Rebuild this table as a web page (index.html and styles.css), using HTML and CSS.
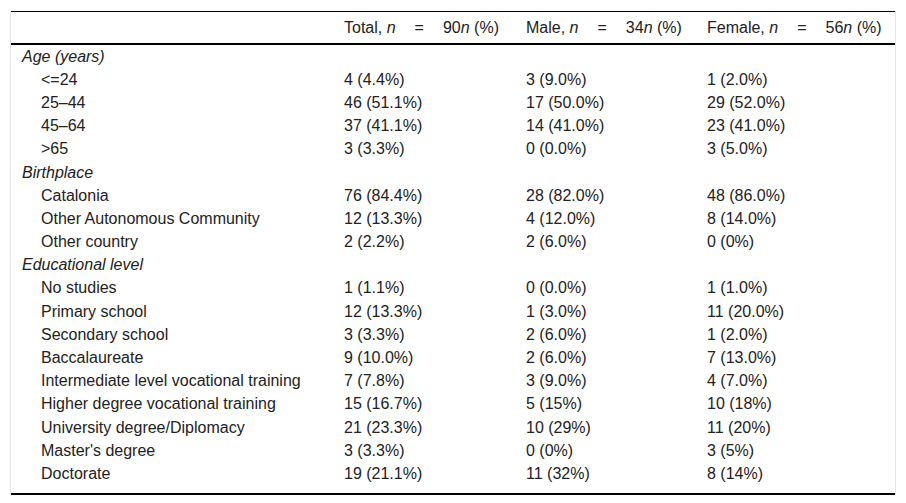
FILE: index.html
```html
<!DOCTYPE html>
<html lang="en">
<head>
<meta charset="utf-8">
<title>Table</title>
<link rel="stylesheet" href="styles.css">
</head>
<body>
<div class="wrap">
<table class="tbl">
<colgroup>
<col class="c1"><col class="c2"><col class="c3"><col class="c4">
</colgroup>
<thead>
<tr>
<th></th>
<th>Total, <i>n</i><span class="eq">=</span>90<i>n</i> (%)</th>
<th>Male, <i>n</i><span class="eq">=</span>34<i>n</i> (%)</th>
<th>Female, <i>n</i><span class="eq">=</span>56<i>n</i> (%)</th>
</tr>
</thead>
<tbody>
<tr class="grp"><td><i>Age (years)</i></td><td></td><td></td><td></td></tr>
<tr><td class="ind">&lt;=24</td><td>4 (4.4%)</td><td>3 (9.0%)</td><td>1 (2.0%)</td></tr>
<tr><td class="ind">25–44</td><td>46 (51.1%)</td><td>17 (50.0%)</td><td>29 (52.0%)</td></tr>
<tr><td class="ind">45–64</td><td>37 (41.1%)</td><td>14 (41.0%)</td><td>23 (41.0%)</td></tr>
<tr><td class="ind">&gt;65</td><td>3 (3.3%)</td><td>0 (0.0%)</td><td>3 (5.0%)</td></tr>
<tr class="grp"><td><i>Birthplace</i></td><td></td><td></td><td></td></tr>
<tr><td class="ind">Catalonia</td><td>76 (84.4%)</td><td>28 (82.0%)</td><td>48 (86.0%)</td></tr>
<tr><td class="ind">Other Autonomous Community</td><td>12 (13.3%)</td><td>4 (12.0%)</td><td>8 (14.0%)</td></tr>
<tr><td class="ind">Other country</td><td>2 (2.2%)</td><td>2 (6.0%)</td><td>0 (0%)</td></tr>
<tr class="grp"><td><i>Educational level</i></td><td></td><td></td><td></td></tr>
<tr><td class="ind">No studies</td><td>1 (1.1%)</td><td>0 (0.0%)</td><td>1 (1.0%)</td></tr>
<tr><td class="ind">Primary school</td><td>12 (13.3%)</td><td>1 (3.0%)</td><td>11 (20.0%)</td></tr>
<tr><td class="ind">Secondary school</td><td>3 (3.3%)</td><td>2 (6.0%)</td><td>1 (2.0%)</td></tr>
<tr><td class="ind">Baccalaureate</td><td>9 (10.0%)</td><td>2 (6.0%)</td><td>7 (13.0%)</td></tr>
<tr><td class="ind">Intermediate level vocational training</td><td>7 (7.8%)</td><td>3 (9.0%)</td><td>4 (7.0%)</td></tr>
<tr><td class="ind">Higher degree vocational training</td><td>15 (16.7%)</td><td>5 (15%)</td><td>10 (18%)</td></tr>
<tr><td class="ind">University degree/Diplomacy</td><td>21 (23.3%)</td><td>10 (29%)</td><td>11 (20%)</td></tr>
<tr><td class="ind">Master's degree</td><td>3 (3.3%)</td><td>0 (0%)</td><td>3 (5%)</td></tr>
<tr class="last"><td class="ind">Doctorate</td><td>19 (21.1%)</td><td>11 (32%)</td><td>8 (14%)</td></tr>
</tbody>
</table>
</div>
</body>
</html>
```

FILE: styles.css
```css
html, body {
  margin: 0;
  padding: 0;
  background: #fff;
}

body {
  font-family: "Liberation Sans", Arial, sans-serif;
  font-size: 16px;
  color: #222;
}

.wrap {
  margin: 11px 0 0 10px;
  width: 884px;
  border-left: 1px solid #e4e4e4;
  border-right: 1px solid #e4e4e4;
}

.tbl {
  width: 884px;
  border-collapse: collapse;
  table-layout: fixed;
  border-top: 1px solid #000;
  border-bottom: 2px solid #000;
}

.c1 { width: 322px; }
.c2 { width: 182px; }
.c3 { width: 181px; }
.c4 { width: 199px; }

.tbl th {
  font-weight: normal;
  text-align: left;
  height: 31px;
  padding: 0 0 0 11px;
  border-bottom: 2px solid #000;
  vertical-align: middle;
  white-space: nowrap;
}

.eq {
  display: inline-block;
  margin: 0 19px 0 19px;
}

.tbl td {
  padding: 0 0 0 11px;
  height: 23.2px;
  line-height: 18px;
  vertical-align: middle;
  white-space: nowrap;
}

.tbl td.ind {
  padding-left: 30px;
}

.tbl tr.last td {
  height: 28px;
  vertical-align: top;
  padding-top: 3px;
}
```
